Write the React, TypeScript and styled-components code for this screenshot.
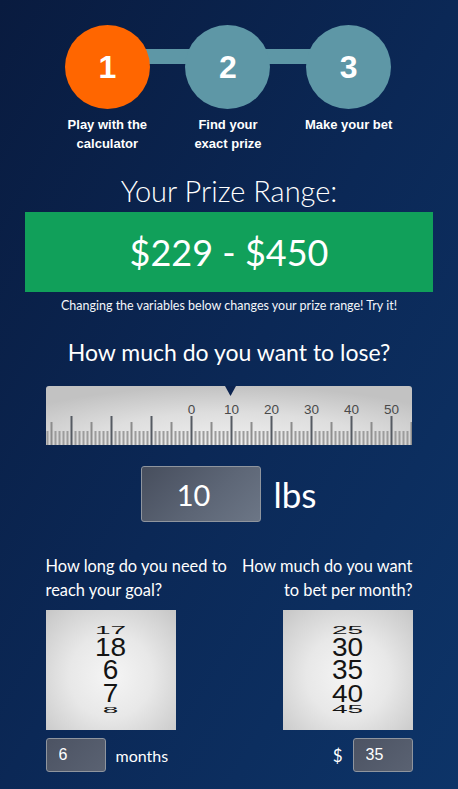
import React from "react";
import styled, { createGlobalStyle } from "styled-components";

const GlobalStyle = createGlobalStyle`
  html, body {
    margin: 0;
    padding: 0;
  }
  body {
    background: #0b2550;
    font-family: Lato, "Noto Sans", sans-serif;
    color: #fff;
  }
`;

const steps = [
  { num: "1", label: ["Play with the", "calculator"], active: true },
  { num: "2", label: ["Find your", "exact prize"], active: false },
  { num: "3", label: ["Make your bet"], active: false },
];

const leftDrum = [
  { v: "17", h: 10, s: 0.42 },
  { v: "18", h: 23, s: 0.95 },
  { v: "6", h: 24, s: 1.02 },
  { v: "7", h: 23, s: 0.92 },
  { v: "8", h: 10, s: 0.34 },
];

const rightDrum = [
  { v: "25", h: 10, s: 0.42 },
  { v: "30", h: 23, s: 0.95 },
  { v: "35", h: 24, s: 1.02 },
  { v: "40", h: 23, s: 0.88 },
  { v: "45", h: 10, s: 0.38 },
];

export default function App() {
  return (
    <Page>
      <GlobalStyle />
      <Steps>
        {steps.map((s) => (
          <Step key={s.num}>
            <Circle active={s.active}>{s.num}</Circle>
            <StepLabel>
              {s.label.map((l) => (
                <div key={l}>{l}</div>
              ))}
            </StepLabel>
          </Step>
        ))}
      </Steps>

      <PrizeTitle>Your Prize Range:</PrizeTitle>
      <PrizeBox>$229 - $450</PrizeBox>
      <Caption>Changing the variables below changes your prize range! Try it!</Caption>

      <Question>How much do you want to lose?</Question>
      <Ruler />

      <WeightRow>
        <BigInput readOnly value="10" />
        <Unit>lbs</Unit>
      </WeightRow>

      <Columns>
        <Column>
          <SmallQuestion>
            How long do you need to
            <br />
            reach your goal?
          </SmallQuestion>
          <Drum values={leftDrum} />
          <InputRow>
            <SmallInput readOnly value="6" />
            <InputLabel>months</InputLabel>
          </InputRow>
        </Column>
        <Column right>
          <SmallQuestion>
            How much do you want
            <br />
            to bet per month?
          </SmallQuestion>
          <Drum values={rightDrum} />
          <InputRow>
            <InputLabel dollar>$</InputLabel>
            <SmallInput readOnly value="35" />
          </InputRow>
        </Column>
      </Columns>
    </Page>
  );
}

function Ruler() {
  const ticks = [];
  for (let i = 0; i < 92; i++) {
    const kind = i % 10 === 6 ? "major" : i % 10 === 1 ? "mid" : "small";
    const h = kind === "major" ? 29 : kind === "mid" ? 23 : 14;
    const fill = kind === "major" ? "#555a62" : kind === "mid" ? "#8c8c8c" : "#9c9c9c";
    ticks.push(<rect key={i} x={0.5 + 4 * i} y={59 - h} width={2} height={h} fill={fill} />);
  }
  const labels = [0, 10, 20, 30, 40, 50].map((n, k) => (
    <text
      key={n}
      x={1.5 + 4 * (36 + k * 10)}
      y={28}
      textAnchor="middle"
      fontSize={13.5}
      fontFamily='"Liberation Sans", Arial, sans-serif'
      fill="#4a4a4a"
    >
      {n}
    </text>
  ));
  return (
    <RulerBox>
      <svg width="366" height="59" viewBox="0 0 366 59">
        {ticks}
        {labels}
        <polygon points="179,0 190,0 184.5,10" fill="#0c2450" />
      </svg>
    </RulerBox>
  );
}

function Drum({ values }: { values: { v: string; h: number; s: number }[] }) {
  return (
    <DrumBox>
      {values.map((d) => (
        <DrumRow key={d.v} h={d.h}>
          <span style={{ transform: `scaleY(${d.s})` }}>{d.v}</span>
        </DrumRow>
      ))}
    </DrumBox>
  );
}

const Page = styled.div`
  min-height: 789px;
  box-sizing: border-box;
  padding-top: 25px;
  display: flex;
  flex-direction: column;
  align-items: center;
  background: linear-gradient(120deg, #091b3f 0%, #0b2856 50%, #0d3468 100%);
`;

const Steps = styled.div`
  position: relative;
  width: 362px;
  display: grid;
  grid-template-columns: repeat(3, 1fr);
  margin-left: -2px;

  &::before {
    content: "";
    position: absolute;
    left: 60px;
    right: 60px;
    top: 24px;
    height: 15px;
    background: #5e97a6;
  }
`;

const Step = styled.div`
  position: relative;
  display: flex;
  flex-direction: column;
  align-items: center;
`;

const Circle = styled.div<{ active: boolean }>`
  width: 85px;
  height: 84px;
  border-radius: 50%;
  background: ${(p) => (p.active ? "#ff6600" : "#5e97a6")};
  display: flex;
  align-items: center;
  justify-content: center;
  font-family: "Liberation Sans", Arial, sans-serif;
  font-weight: bold;
  font-size: 32px;
  color: #fff;
`;

const StepLabel = styled.div`
  margin-top: 6px;
  font-family: "Liberation Sans", Arial, sans-serif;
  font-weight: bold;
  font-size: 13px;
  line-height: 19px;
  text-align: center;
`;

const PrizeTitle = styled.div`
  margin-top: 20px;
  font-size: 29px;
  font-weight: 300;
  line-height: 35px;
`;

const PrizeBox = styled.div`
  margin-top: 4px;
  width: 408px;
  height: 80px;
  background: #11a05a;
  display: flex;
  align-items: center;
  justify-content: center;
  font-size: 36px;
`;

const Caption = styled.div`
  margin-top: 6px;
  font-size: 12.5px;
  line-height: 15px;
  color: #f4f6fa;
`;

const Question = styled.div`
  margin-top: 26px;
  font-size: 23px;
  line-height: 27px;
`;

const RulerBox = styled.div`
  margin-top: 20px;
  width: 366px;
  height: 59px;
  border-radius: 3px 3px 0 0;
  background: radial-gradient(ellipse 70% 100% at 50% 100%, #f0f0f0 0%, #dedede 55%, #c2c2c2 100%);

  svg {
    display: block;
  }
`;

const WeightRow = styled.div`
  margin-top: 21px;
  display: flex;
  align-items: center;
  gap: 12px;
`;

const BigInput = styled.input`
  width: 120px;
  height: 56px;
  box-sizing: border-box;
  border: 1px solid #8f959e;
  border-radius: 3px;
  background: linear-gradient(135deg, #474e5d 0%, #5c6575 55%, #6c7686 100%);
  color: #fff;
  font-family: Lato, sans-serif;
  font-size: 29px;
  text-align: center;
  padding: 0 16px 0 0;
  outline: none;
`;

const Unit = styled.span`
  font-size: 35px;
  line-height: 40px;
`;

const Columns = styled.div`
  margin-top: 32px;
  width: 367px;
  display: grid;
  grid-template-columns: 1fr 1fr;
`;

const Column = styled.div<{ right?: boolean }>`
  display: flex;
  flex-direction: column;
  align-items: ${(p) => (p.right ? "flex-end" : "flex-start")};
  text-align: ${(p) => (p.right ? "right" : "left")};
`;

const SmallQuestion = styled.div`
  font-size: 16.4px;
  line-height: 24px;
  white-space: nowrap;
`;

const DrumBox = styled.div`
  margin-top: 8px;
  width: 130px;
  height: 120px;
  display: flex;
  flex-direction: column;
  justify-content: center;
  align-items: center;
  background: radial-gradient(circle at 50% 55%, #f5f5f5 0%, #e8e8e8 45%, #c6c6c6 100%);
  font-family: "Liberation Sans", Arial, sans-serif;
  font-size: 28px;
  color: #141414;
`;

const DrumRow = styled.div<{ h: number }>`
  height: ${(p) => p.h}px;
  display: flex;
  align-items: center;
  justify-content: center;

  span {
    display: block;
    line-height: 22px;
  }
`;

const InputRow = styled.div`
  margin-top: 8px;
  display: flex;
  align-items: center;
`;

const SmallInput = styled.input`
  width: 60px;
  height: 34px;
  box-sizing: border-box;
  border: 1px solid #8f959e;
  border-radius: 3px;
  background: linear-gradient(135deg, #4c5363 0%, #5a6272 100%);
  color: #fff;
  font-family: "Liberation Sans", Arial, sans-serif;
  font-size: 16px;
  padding: 0 0 0 12px;
  outline: none;
`;

const InputLabel = styled.span<{ dollar?: boolean }>`
  font-size: ${(p) => (p.dollar ? 17 : 16)}px;
  margin: ${(p) => (p.dollar ? "0 10px 0 0" : "0 0 0 10px")};
`;
